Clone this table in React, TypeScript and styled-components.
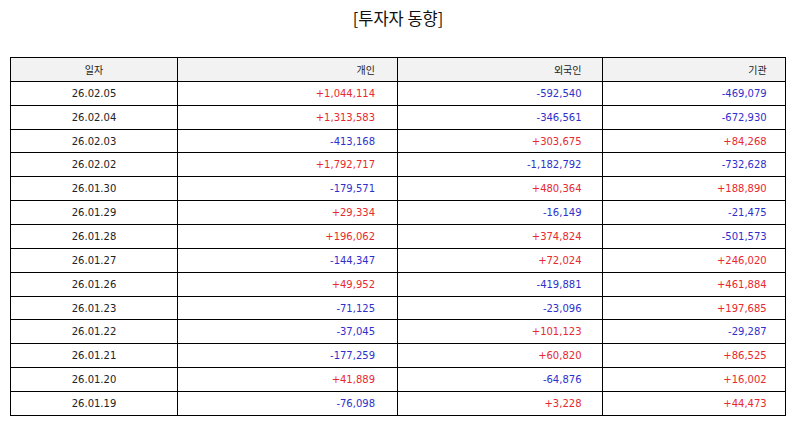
import React from "react";
import styled, { createGlobalStyle } from "styled-components";

const GlobalStyle = createGlobalStyle`
  html, body { margin: 0; padding: 0; background: #fff; }
  body { font-family: "DejaVu Sans", "Noto Sans CJK KR", sans-serif; color: #222; }
`;

const Page = styled.div`
  width: 795px;
  height: 425px;
  display: flex;
  flex-direction: column;
  align-items: flex-start;
`;

const Title = styled.h1`
  margin: 0;
  width: 795px;
  height: 57px;
  box-sizing: border-box;
  padding-top: 5px;
  padding-left: 1px;
  text-align: center;
  font-family: "Noto Sans CJK KR", sans-serif;
  font-size: 16.5px;
  font-weight: 400;
  line-height: 26px;
  color: #111;
`;

const Table = styled.table`
  margin-left: 10px;
  width: 776px;
  border-collapse: collapse;
  table-layout: fixed;
  font-size: 10px;
`;

const Col = styled.col<{ $w: number }>`
  width: ${(p) => p.$w}px;
`;

const HeadCell = styled.th<{ $pad: number; $align: "center" | "right" }>`
  height: 22.87px;
  padding: 0 ${(p) => p.$pad}px 0 0;
  background: #f2f2f2;
  border: 1px solid #000;
  font-weight: 400;
  text-align: ${(p) => p.$align};
  color: #222;
`;

const Cell = styled.td<{ $pad: number; $align: "center" | "right"; $tone?: "up" | "down" }>`
  height: 22.87px;
  padding: 0 ${(p) => p.$pad}px 0 0;
  border: 1px solid #000;
  text-align: ${(p) => p.$align};
  color: ${(p) => (p.$tone === "up" ? "#e8292f" : p.$tone === "down" ? "#2f2fcc" : "#222")};
`;

const rows: [string, string, string, string][] = [
  ["26.02.05", "+1,044,114", "-592,540", "-469,079"],
  ["26.02.04", "+1,313,583", "-346,561", "-672,930"],
  ["26.02.03", "-413,168", "+303,675", "+84,268"],
  ["26.02.02", "+1,792,717", "-1,182,792", "-732,628"],
  ["26.01.30", "-179,571", "+480,364", "+188,890"],
  ["26.01.29", "+29,334", "-16,149", "-21,475"],
  ["26.01.28", "+196,062", "+374,824", "-501,573"],
  ["26.01.27", "-144,347", "+72,024", "+246,020"],
  ["26.01.26", "+49,952", "-419,881", "+461,884"],
  ["26.01.23", "-71,125", "-23,096", "+197,685"],
  ["26.01.22", "-37,045", "+101,123", "-29,287"],
  ["26.01.21", "-177,259", "+60,820", "+86,525"],
  ["26.01.20", "+41,889", "-64,876", "+16,002"],
  ["26.01.19", "-76,098", "+3,228", "+44,473"],
];

const widths = [167, 220, 205, 183];
const pads = [0, 22, 20.5, 18.3];
const heads = ["일자", "개인", "외국인", "기관"];

const tone = (v: string) => (v.startsWith("+") ? "up" : "down");

export default function App() {
  return (
    <Page>
      <GlobalStyle />
      <Title>[투자자 동향]</Title>
      <Table>
        <colgroup>
          {widths.map((w, i) => (
            <Col key={i} $w={w} />
          ))}
        </colgroup>
        <thead>
          <tr>
            {heads.map((h, i) => (
              <HeadCell key={h} $pad={pads[i]} $align={i === 0 ? "center" : "right"}>
                {h}
              </HeadCell>
            ))}
          </tr>
        </thead>
        <tbody>
          {rows.map((r) => (
            <tr key={r[0]}>
              <Cell $pad={0} $align="center">{r[0]}</Cell>
              {r.slice(1).map((v, i) => (
                <Cell key={i} $pad={pads[i + 1]} $align="right" $tone={tone(v)}>
                  {v}
                </Cell>
              ))}
            </tr>
          ))}
        </tbody>
      </Table>
    </Page>
  );
}
